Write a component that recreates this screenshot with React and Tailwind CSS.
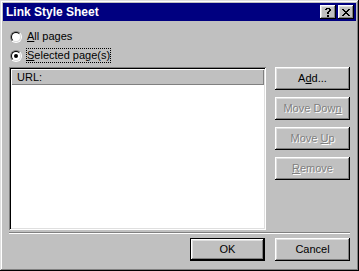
import React from "react";

const raised =
  "shadow-[inset_-1px_-1px_#000,inset_1px_1px_#fff,inset_-2px_-2px_#808080,inset_2px_2px_#dfdfdf]";

function Btn({ children, disabled, isDefault }) {
  if (isDefault) {
    return (
      <div className="w-[75px] h-[23px] border border-black bg-[#c0c0c0]">
        <div className="w-full h-full flex items-center justify-center shadow-[inset_-1px_-1px_#000,inset_1px_1px_#fff,inset_-2px_-2px_#808080,inset_2px_2px_#dfdfdf] text-black">
          {children}
        </div>
      </div>
    );
  }
  return (
    <div
      className={`w-[75px] h-[23px] flex items-center justify-center bg-[#c0c0c0] ${raised} ${
        disabled ? "text-[#808080] [text-shadow:1px_1px_0_#fff]" : "text-black"
      }`}
    >
      {children}
    </div>
  );
}

function Radio({ checked }) {
  return (
    <div className="w-[12px] h-[12px] rounded-full border border-t-[#808080] border-l-[#808080] border-b-white border-r-white">
      <div className="w-full h-full rounded-full border border-t-black border-l-black border-b-[#dfdfdf] border-r-[#dfdfdf] bg-white flex items-center justify-center">
        {checked && <div className="w-[4px] h-[4px] rounded-full bg-black" />}
      </div>
    </div>
  );
}

function CloseGlyph() {
  const px = [
    [0, 0], [1, 0], [6, 0], [7, 0],
    [1, 1], [2, 1], [5, 1], [6, 1],
    [2, 2], [3, 2], [4, 2], [5, 2],
    [3, 3], [4, 3],
    [2, 4], [3, 4], [4, 4], [5, 4],
    [1, 5], [2, 5], [5, 5], [6, 5],
    [0, 6], [1, 6], [6, 6], [7, 6],
  ];
  return (
    <svg width="8" height="7" viewBox="0 0 8 7" shapeRendering="crispEdges">
      {px.map(([x, y], i) => (
        <rect key={i} x={x} y={y} width="1" height="1" fill="#000" />
      ))}
    </svg>
  );
}

function HelpGlyph() {
  const rows = [
    ".####.",
    "##..##",
    "....##",
    "...##.",
    "..##..",
    "..##..",
    "......",
    "..##..",
    "..##..",
  ];
  const rects = [];
  rows.forEach((r, y) =>
    r.split("").forEach((c, x) => {
      if (c === "#") rects.push(<rect key={`${x}-${y}`} x={x} y={y} width="1" height="1" fill="#000" />);
    })
  );
  return (
    <svg width="6" height="9" viewBox="0 0 6 9" shapeRendering="crispEdges">
      {rects}
    </svg>
  );
}

export default function App() {
  return (
    <div
      className="w-[359px] h-[271px] bg-[#c0c0c0] p-[3px] flex flex-col shadow-[inset_-1px_-1px_#000,inset_1px_1px_#dfdfdf,inset_-2px_-2px_#808080,inset_2px_2px_#fff] text-[11px] leading-[13px] text-black"
      style={{ fontFamily: '"Liberation Sans", Arial, sans-serif' }}
    >
      {/* Title bar */}
      <div className="h-[18px] bg-[#000080] flex items-center pl-[3px] pr-[2px]">
        <div className="flex-1 text-white font-bold text-[12px] leading-[14px]">Link Style Sheet</div>
        <div className="flex gap-[2px]">
          <div className={`w-[16px] h-[14px] bg-[#c0c0c0] flex items-center justify-center ${raised}`}>
            <HelpGlyph />
          </div>
          <div className={`w-[16px] h-[14px] bg-[#c0c0c0] flex items-center justify-center ${raised}`}>
            <CloseGlyph />
          </div>
        </div>
      </div>

      {/* Body */}
      <div className="flex-1 px-[6px] pt-[6px] flex flex-col">
        <div className="h-[19px] flex items-center pl-[1px] gap-[4px]">
          <Radio />
          <span className="border border-transparent px-0">
            <span className="underline">A</span>ll pages
          </span>
        </div>
        <div className="h-[19px] flex items-center pl-[1px] gap-[4px]">
          <Radio checked />
          <span className="border border-dotted border-black">
            <span className="underline">S</span>elected page(s)
          </span>
        </div>

        <div className="flex mt-[2px] gap-[9px]">
          <div className="w-[257px] h-[163px] bg-white p-[2px] shadow-[inset_1px_1px_#808080,inset_-1px_-1px_#fff,inset_2px_2px_#000,inset_-2px_-2px_#dfdfdf]">
            <div className="h-[16px] bg-[#c0c0c0] shadow-[inset_1px_1px_#fff,inset_-1px_-1px_#808080] flex items-center pl-[6px]">
              URL:
            </div>
          </div>
          <div className="flex flex-col gap-[7px]">
            <Btn>
              <span>
                A<span className="underline">d</span>d...
              </span>
            </Btn>
            <Btn disabled>
              <span>
                Move Dow<span className="underline">n</span>
              </span>
            </Btn>
            <Btn disabled>
              <span>
                Move <span className="underline">U</span>p
              </span>
            </Btn>
            <Btn disabled>
              <span>
                <span className="underline">R</span>emove
              </span>
            </Btn>
          </div>
        </div>

        <div className="mt-[2px] h-[2px] border-t border-t-[#808080] border-b border-b-white" />

        <div className="mt-[4px] flex justify-end gap-[10px]">
          <Btn isDefault>OK</Btn>
          <Btn>Cancel</Btn>
        </div>
      </div>
    </div>
  );
}
